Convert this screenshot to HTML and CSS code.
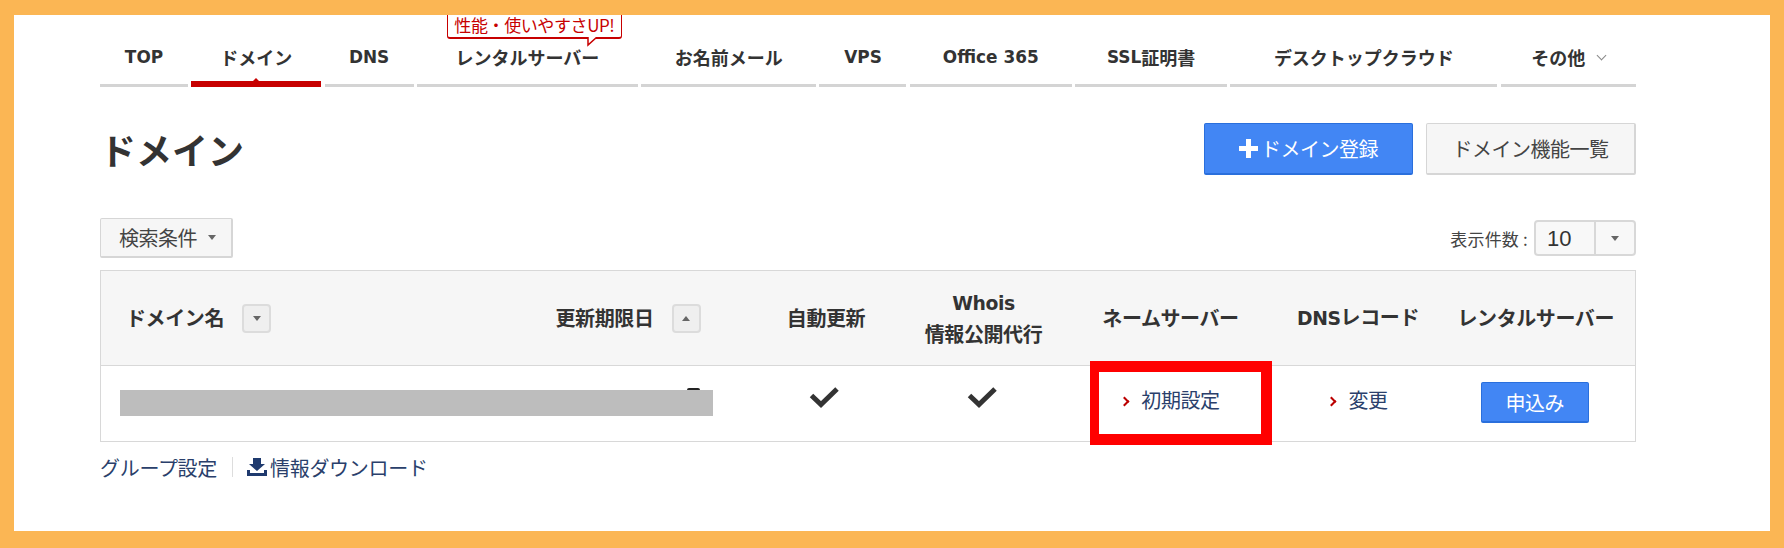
FILE: index.html
```html
<!DOCTYPE html>
<html lang="ja">

<head>
    <meta charset="UTF-8">
    <title>ドメイン</title>
    <link rel="stylesheet" href="styles.css">
</head>

<body>
    <div class="frame">
        <nav class="tabs">
            <a class="tab tab-top"><span class="latin">TOP</span></a>
            <a class="tab tab-domain active">ドメイン</a>
            <a class="tab tab-dns"><span class="latin">DNS</span></a>
            <a class="tab tab-rental">レンタルサーバー<span class="balloon">性能・使いやすさUP!<svg class="balloon-tail" viewBox="0 0 12 10"><path d="M1 0 V8 L10 0" fill="#fff" stroke="#c70000" stroke-width="1.500"/></svg></span></a>
            <a class="tab tab-mail">お名前メール</a>
            <a class="tab tab-vps"><span class="latin">VPS</span></a>
            <a class="tab tab-office"><span class="latin">Office 365</span></a>
            <a class="tab tab-ssl"><span class="latin">SSL</span>証明書</a>
            <a class="tab tab-desktop">デスクトップクラウド</a>
            <a class="tab tab-other">その他<span class="chevron-down"></span></a>
        </nav>

        <div class="title-row">
            <h1>ドメイン</h1>
            <div class="title-buttons">
                <a class="button button-blue button-add"><span class="plus"></span>ドメイン登録</a>
                <a class="button button-gray button-list">ドメイン機能一覧</a>
            </div>
        </div>

        <div class="toolbar">
            <a class="button button-gray button-search">検索条件<span class="caret"></span></a>
            <div class="count">
                <span class="count-label">表示件数 :</span>
                <div class="count-select">
                    <span class="count-value">10</span>
                    <span class="count-arrow"><span class="caret"></span></span>
                </div>
            </div>
        </div>

        <table class="domains">
            <colgroup>
                <col class="col-name">
                <col class="col-date">
                <col class="col-auto">
                <col class="col-whois">
                <col class="col-ns">
                <col class="col-dns">
                <col class="col-rental">
            </colgroup>
            <thead>
                <tr>
                    <th class="th-name"><span class="th-sort">ドメイン名<span class="sort"><span class="caret"></span></span></span></th>
                    <th class="th-date"><span class="th-sort">更新期限日<span class="sort"><span class="caret caret-up"></span></span></span></th>
                    <th>自動更新</th>
                    <th><span class="latin">Whois</span><br>情報公開代行</th>
                    <th>ネームサーバー</th>
                    <th><span class="latin">DNS</span>レコード</th>
                    <th>レンタルサーバー</th>
                </tr>
            </thead>
            <tbody>
                <tr>
                    <td colspan="2" class="td-mask"><div class="mask"></div></td>
                    <td class="td-check"><svg class="check" viewBox="0 0 30 22"><path d="M2.500 9.500 L12 18.500 L28 3" fill="none" stroke="#333" stroke-width="5"/></svg></td>
                    <td class="td-check"><svg class="check" viewBox="0 0 30 22"><path d="M2.500 9.500 L12 18.500 L28 3" fill="none" stroke="#333" stroke-width="5"/></svg></td>
                    <td class="td-link"><a class="link">初期設定</a><div class="highlight"></div></td>
                    <td class="td-link"><a class="link">変更</a></td>
                    <td class="td-apply"><a class="button button-blue button-apply">申込み</a></td>
                </tr>
            </tbody>
        </table>

        <div class="below">
            <a class="below-link">グループ設定</a>
            <span class="below-sep"></span>
            <svg class="download" viewBox="0 0 20 18"><path d="M6 0 H14 V6 H18 L10 13 L2 6 H6 Z M0 12 H3 V15 H17 V12 H20 V18 H0 Z" fill="#1f3a6e"/></svg>
            <a class="below-link">情報ダウンロード</a>
        </div>
    </div>
</body>

</html>
```

FILE: styles.css
```css
body {
    margin: 0;
    background-color: #fbb654;
    font-family: "Noto Sans CJK JP", sans-serif;
    color: #333;
}

.frame {
    width: 1756px;
    height: 516px;
    margin: 15px 14px 17px;
    padding-left: 86px;
    box-sizing: border-box;
    background-color: #fff;
    overflow: hidden;
}

.latin {
    font-family: "DejaVu Sans", sans-serif;
    font-size: 0.94em;
}

/* tabs */
.tabs {
    display: flex;
    gap: 3.3px;
    width: 1536px;
    height: 72px;
}
.tab {
    position: relative;
    display: flex;
    justify-content: center;
    align-items: center;
    height: 72px;
    padding-top: 15px;
    box-sizing: border-box;
    border-bottom: 3px solid #d4d4d4;
    font-size: 18px;
    font-weight: 700;
}
.tab-top { width: 88px; }
.tab-domain { width: 130px; }
.tab-dns { width: 89px; }
.tab-rental { width: 221px; }
.tab-mail { width: 175px; }
.tab-vps { width: 87px; }
.tab-office { width: 162px; }
.tab-ssl { width: 152px; }
.tab-desktop { width: 267px; }
.tab-other { flex: 1; }

.tab.active {
    padding-top: 18px;
    border-bottom: 6px solid #c70000;
}
.tab.active::after {
    content: "";
    position: absolute;
    left: 50%;
    bottom: 0;
    margin-left: -3px;
    border: 3px solid transparent;
    border-top-width: 0;
    border-bottom-color: #c70000;
}

.balloon {
    position: absolute;
    left: 30px;
    top: -12px;
    width: 175px;
    height: 36px;
    box-sizing: border-box;
    padding-top: 11px;
    background-color: #fff;
    border: 1px solid #c70000;
    border-bottom-width: 2px;
    border-radius: 3px;
    color: #c70000;
    font-size: 17px;
    font-weight: 400;
    line-height: 20px;
    text-align: center;
    white-space: nowrap;
    letter-spacing: -0.4px;
}
.balloon-tail {
    position: absolute;
    left: 139px;
    top: 33px;
    width: 12px;
    height: 10px;
}

.chevron-down {
    width: 6px;
    height: 6px;
    margin: -4px 0 0 13px;
    border-right: 1px solid #888;
    border-bottom: 1px solid #888;
    transform: rotate(45deg);
}

/* title */
.title-row {
    display: flex;
    justify-content: space-between;
    align-items: center;
    width: 1536px;
    height: 52px;
    margin-top: 36px;
}
h1 {
    margin: 0;
    font-size: 36px;
    font-weight: 700;
    line-height: 51px;
}
.title-buttons {
    display: flex;
    gap: 13px;
}

.button {
    display: flex;
    justify-content: center;
    align-items: center;
    box-sizing: border-box;
    border-radius: 2px;
    font-size: 20px;
    letter-spacing: -0.5px;
}
.button-blue {
    background-color: #4286f4;
    border: 1px solid #2a6fdc;
    border-bottom-width: 2px;
    color: #fff;
}
.button-gray {
    background-color: #f6f6f6;
    border: 2px solid #d6d6d6;
    border-width: 1px 2px 2px 1px;
    color: #444;
}
.button-add {
    width: 209px;
    height: 52px;
}
.button-list {
    width: 210px;
    height: 52px;
}
.plus {
    width: 19px;
    height: 19px;
    margin-right: 3px;
    background:
        linear-gradient(#fff, #fff) center / 19px 5px no-repeat,
        linear-gradient(#fff, #fff) center / 5px 19px no-repeat;
}

/* toolbar */
.toolbar {
    display: flex;
    justify-content: space-between;
    align-items: center;
    width: 1536px;
    height: 40px;
    margin-top: 43px;
}
.button-search {
    width: 133px;
    height: 40px;
    padding-left: 3px;
    letter-spacing: -0.5px;
}
.caret {
    width: 0;
    height: 0;
    margin-left: 11px;
    border-style: solid;
    border-width: 5px 4px 0;
    border-color: #666 transparent transparent;
}
.caret-up {
    border-width: 0 4px 5px;
    border-color: transparent transparent #666;
}
.count {
    display: flex;
    align-items: center;
    gap: 6px;
}
.count-label {
    font-size: 17px;
    letter-spacing: 0.2px;
    color: #444;
}
.count-select {
    display: flex;
    width: 102px;
    height: 36px;
    box-sizing: border-box;
    background-color: #f8f8f8;
    border: 2px solid #d8d8d8;
    border-radius: 4px;
}
.count-value {
    width: 60px;
    padding-left: 11px;
    box-sizing: border-box;
    border-right: 2px solid #d8d8d8;
    font-family: "Liberation Sans", sans-serif;
    font-size: 22px;
    line-height: 34px;
}
.count-arrow {
    flex: 1;
    display: flex;
    justify-content: center;
    align-items: center;
}
.count-arrow .caret {
    margin: 0;
}

/* table */
.domains {
    width: 1535px;
    margin-top: 12px;
    table-layout: fixed;
    border-collapse: collapse;
    border: 1px solid #d8d8d8;
}
.col-name { width: 446px; }
.col-date { width: 200px; }
.col-auto { width: 159px; }
.col-whois { width: 156px; }
.col-ns { width: 218px; }
.col-dns { width: 157px; }
.col-rental { width: 199px; }

th {
    height: 94px;
    padding: 0;
    background-color: #f6f6f6;
    border-bottom: 1px solid #d8d8d8;
    font-size: 20px;
    font-weight: 700;
    line-height: 30px;
    letter-spacing: -0.4px;
    text-align: center;
}
.th-name {
    padding-left: 25px;
    text-align: left;
}
.th-date {
    padding-right: 46px;
    text-align: right;
}
.th-sort {
    display: inline-flex;
    align-items: center;
}
.sort {
    display: flex;
    justify-content: center;
    align-items: center;
    width: 29px;
    height: 29px;
    margin-left: 18px;
    box-sizing: border-box;
    background-color: #efefef;
    border: 2px solid #dcdcdc;
    border-radius: 4px;
}
.sort .caret {
    margin: 0;
}

td {
    position: relative;
    height: 76px;
    padding: 0;
    box-sizing: border-box;
    text-align: center;
}
.td-mask {
    padding: 0 0 2px 19px;
}
.td-check {
    padding: 0 4px 13px 0;
}
.td-link {
    padding-bottom: 8px;
}
.td-apply {
    padding: 0 2px 2px 0;
}
.mask {
    position: relative;
    width: 593px;
    height: 26px;
    background-color: #bdbdbd;
}
.mask::before {
    content: "";
    position: absolute;
    left: 567px;
    top: -2px;
    width: 13px;
    height: 2px;
    background-color: #222;
    border-radius: 7px 7px 0 0;
}
.check {
    display: block;
    width: 30px;
    height: 22px;
    margin: 0 auto;
}
.link {
    font-size: 20px;
    letter-spacing: -0.4px;
    color: #2a3f6b;
}
.link::before {
    content: "";
    display: inline-block;
    width: 5px;
    height: 5px;
    margin: 0 13px 3px 0;
    border-top: 2px solid #b00;
    border-right: 2px solid #b00;
    transform: rotate(45deg);
}
.button-apply {
    width: 108px;
    height: 41px;
    margin: 0 auto;
}

/* red box drawn over the name server cell */
.highlight {
    position: absolute;
    left: 28px;
    top: -5px;
    width: 182px;
    height: 84px;
    box-sizing: border-box;
    border: 11px solid #ff0000;
    border-left-width: 9px;
}

/* below table */
.below {
    display: flex;
    align-items: center;
    height: 36px;
    margin-top: 7px;
    color: #2a3f6b;
    font-size: 20px;
    letter-spacing: -0.3px;
}
.below-sep {
    width: 1px;
    height: 20px;
    margin: 0 14px 0 15px;
    background-color: #ddd;
}
.download {
    width: 20px;
    height: 18px;
    margin-right: 3px;
}
```
